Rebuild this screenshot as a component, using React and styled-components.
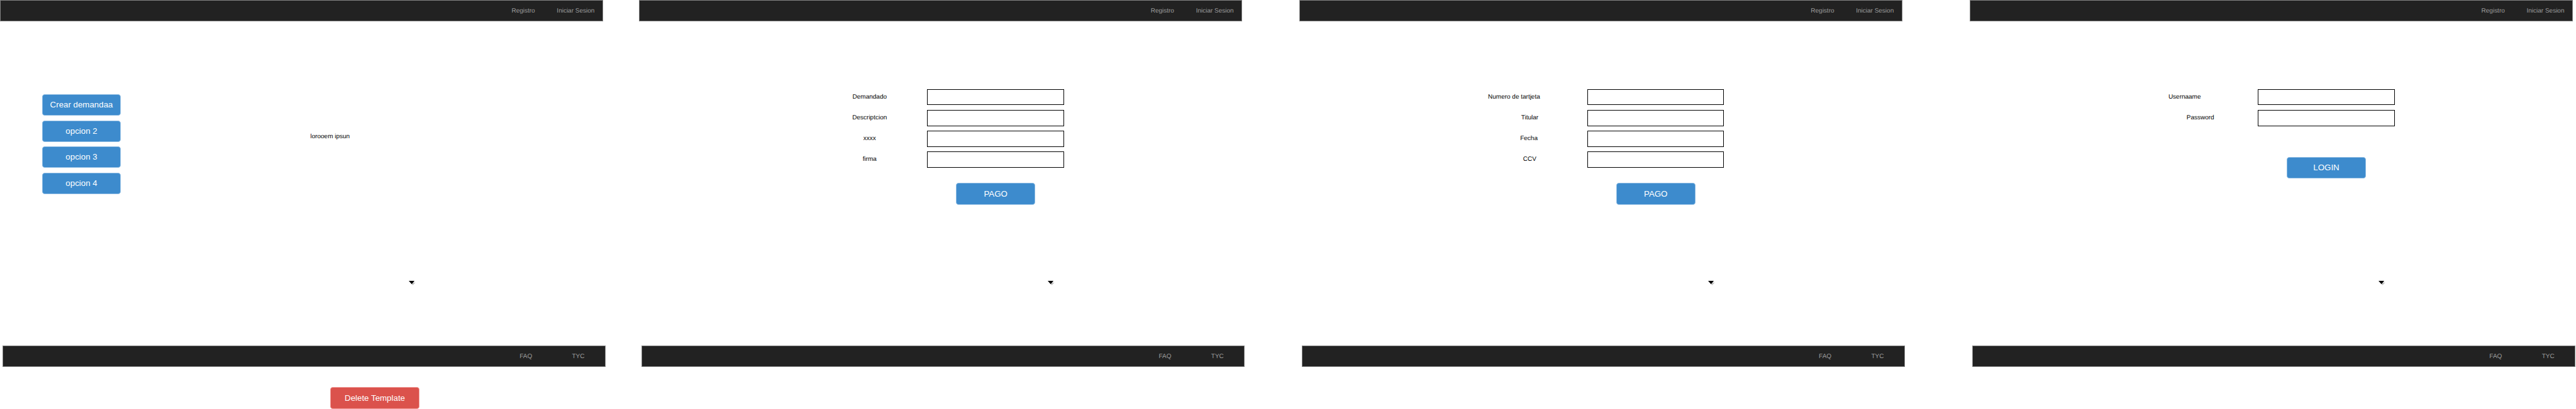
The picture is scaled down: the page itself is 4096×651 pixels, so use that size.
import React from "react";
import styled, { createGlobalStyle } from "styled-components";

const SCALE = 4096 / 4917;
const u = (n) => `${(n * SCALE).toFixed(3)}px`;

const GlobalStyle = createGlobalStyle`
  * { box-sizing: border-box; }
  html, body { margin: 0; background: #fff; overflow: hidden; }
  body {
    font-family: "Liberation Sans", Arial, Helvetica, sans-serif;
    font-size: ${u(12)};
    line-height: ${u(14)};
    color: #000;
    text-rendering: geometricPrecision;
  }
`;

const Board = styled.main`
  display: grid;
  grid-template-columns: ${u(1220)} ${u(1260)} ${u(1280)} ${u(1157)};
  height: 651px;
  overflow: hidden;
`;

const Screen = styled.section`
  display: flex;
  flex-direction: column;
  align-items: flex-start;
`;

const Bar = styled.nav`
  display: flex;
  flex: none;
  justify-content: flex-end;
  width: ${u(1151)};
  height: ${u(41)};
  padding-right: ${u(1)};
  background: #222;
  border: 1px solid #838383;
  color: #9d9d9d;
`;

const FooterBar = styled(Bar)`
  margin-left: ${u(5)};
`;

const BarLink = styled.span`
  width: ${u(100)};
  line-height: ${u(39.8)};
  text-align: center;
  white-space: nowrap;
`;

const Body = styled.div`
  flex: none;
  height: ${u(619)};
`;

const Content = styled.div`
  display: flex;
  height: ${u(496)};
`;

const Menu = styled.div`
  display: flex;
  flex-direction: column;
  gap: ${u(9)};
  padding: ${u(139)} 0 0 ${u(80)};
`;

const Copy = styled.p`
  width: ${u(200)};
  margin: ${u(213)} 0 0 ${u(299)};
  text-align: center;
`;

const Form = styled.form`
  display: flex;
  flex-direction: column;
  gap: ${u(9)};
  padding-top: ${u(129)};
`;

const Field = styled.label`
  display: flex;
  height: ${u(31)};
`;

const FieldName = styled.span`
  width: ${u(200)};
  margin-left: ${(p) => u(p.$center - 100)};
  margin-right: ${(p) => u(450 - p.$center)};
  line-height: ${u(32)};
  text-align: center;
  white-space: nowrap;
`;

const Input = styled.input`
  width: ${u(261)};
  height: ${u(31)};
  padding: 0;
  border: 1px solid #000;
  border-radius: 0;
  background: #fff;
`;

const Button = styled.button`
  flex: none;
  width: ${u(151)};
  height: ${u(41)};
  padding: 0 0 ${u(1)};
  border: 1px solid #8ebce3;
  border-radius: ${u(5.5)};
  background: #3d8bcd;
  color: #fff;
  font: inherit;
  font-size: ${u(16)};
  line-height: ${u(18)};
  text-align: center;
  white-space: nowrap;
`;

const SubmitButton = styled(Button)`
  margin: ${(p) => u(p.$space - 9)} 0 0 ${u(605)};
`;

const DangerButton = styled(Button)`
  width: ${u(171)};
  margin: ${u(39)} 0 0 ${u(630)};
  border-color: #f2a09c;
  background: #db524c;
`;

const Caret = styled.svg`
  display: block;
  width: ${u(14)};
  height: ${u(9)};
  margin-left: ${u(780)};
`;

function Page({ children, after }) {
  return (
    <Screen>
      <Bar>
        <BarLink>Registro</BarLink>
        <BarLink>Iniciar Sesion</BarLink>
      </Bar>
      <Body>
        <Content>{children}</Content>
        <Caret viewBox="0 0 14 9">
          <path d="M8 3.2H12.8L7.6 8.4L5.5 6Z" fill="#c4c4c4" />
          <path d="M0 0H11L5.5 6.4Z" fill="#000" />
        </Caret>
      </Body>
      <FooterBar as="footer">
        <BarLink>FAQ</BarLink>
        <BarLink>TYC</BarLink>
      </FooterBar>
      {after}
    </Screen>
  );
}

function FormPage({ fields, action, space }) {
  return (
    <Page>
      <Form>
        {fields.map(([name, center = 440]) => (
          <Field key={name}>
            <FieldName $center={center}>{name}</FieldName>
            <Input />
          </Field>
        ))}
        <SubmitButton type="button" $space={space}>
          {action}
        </SubmitButton>
      </Form>
    </Page>
  );
}

export default function App() {
  return (
    <>
      <GlobalStyle />
      <Board>
        <Page after={<DangerButton>Delete Template</DangerButton>}>
          <Menu>
            <Button>Crear demandaa</Button>
            <Button>opcion 2</Button>
            <Button>opcion 3</Button>
            <Button>opcion 4</Button>
          </Menu>
          <Copy>lorooem ipsun</Copy>
        </Page>
        <FormPage
          fields={[["Demandado"], ["Descriptcion"], ["xxxx"], ["firma"]]}
          action="PAGO"
          space={29}
        />
        <FormPage
          fields={[["Numero de tartjeta", 410], ["Titular"], ["Fecha", 438.4], ["CCV"]]}
          action="PAGO"
          space={29}
        />
        <FormPage
          fields={[["Usernaame", 410], ["Password"]]}
          action="LOGIN"
          space={59}
        />
      </Board>
    </>
  );
}
